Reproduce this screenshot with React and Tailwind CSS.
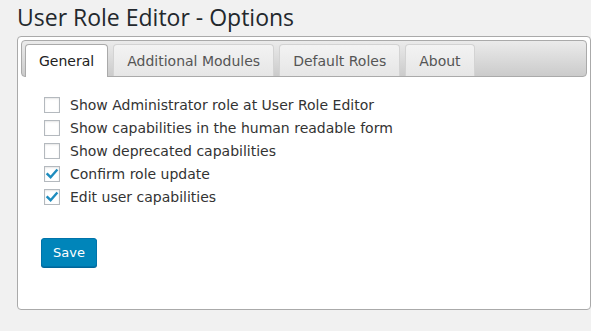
import React from "react";

function Check({ checked }) {
  return (
    <span className="w-[16px] h-[16px] border border-[#b4b9be] bg-white shadow-[inset_0_1px_2px_rgba(0,0,0,0.1)] flex items-center justify-center shrink-0">
      {checked && (
        <svg width="14" height="14" viewBox="0 0 14 14">
          <path d="M2.5 7.2 L5.6 10.2 L11.6 3.4" fill="none" stroke="#1e8cbe" strokeWidth="2.4" strokeLinecap="square" />
        </svg>
      )}
    </span>
  );
}

const rows = [
  ["Show Administrator role at User Role Editor", false],
  ["Show capabilities in the human readable form", false],
  ["Show deprecated capabilities", false],
  ["Confirm role update", true],
  ["Edit user capabilities", true],
];

const tabs = ["General", "Additional Modules", "Default Roles", "About"];

export default function App() {
  return (
    <div className="w-[591px] h-[331px] bg-[#f1f1f1] overflow-hidden flex flex-col" style={{ fontFamily: "'DejaVu Sans', Verdana, sans-serif" }}>
      <h1 className="pl-[17px] pt-[2px] h-[36px] text-[23px] leading-[30px] text-[#23282d]" style={{ fontFamily: "'Open Sans', 'Noto Sans', sans-serif" }}>
        User Role Editor - Options
      </h1>
      <div className="ml-[17px] w-[574px] h-[274px] bg-white border border-[#aaaaaa] rounded-[4px] p-[3px] flex flex-col">
        <div className="h-[37px] border border-[#aaaaaa] rounded-[4px] bg-gradient-to-b from-[#ebebeb] to-[#cbcbcb] flex items-end gap-[5px] pl-[3px]">
          {tabs.map((t, i) =>
            i === 0 ? (
              <div key={t} className="h-[33px] mb-[-1px] px-[13px] bg-white border border-b-0 border-[#aaaaaa] rounded-t-[4px] flex items-center pt-[1px] text-[14px] text-[#212121]">
                {t}
              </div>
            ) : (
              <div key={t} className="h-[32px] px-[13px] bg-gradient-to-b from-[#f3f3f3] to-[#e6e6e6] border border-b-0 border-[#d3d3d3] rounded-t-[4px] flex items-center pt-[1px] text-[14px] text-[#555555]">
                {t}
              </div>
            )
          )}
        </div>
        <div className="flex flex-col pl-[23px] pt-[20px] gap-[7px]">
          {rows.map(([label, c]) => (
            <label key={label} className="flex items-center gap-[10px] h-[16px] text-[14px] text-[#333333]">
              <Check checked={c} />
              <span>{label}</span>
            </label>
          ))}
          <div className="mt-[26px] ml-[-3px]">
            <button className="h-[29px] px-[11px] bg-[#0085ba] border border-[#0073aa] rounded-[3px] text-white text-[13px] shadow-[0_1px_0_#006799]">
              Save
            </button>
          </div>
        </div>
      </div>
    </div>
  );
}
